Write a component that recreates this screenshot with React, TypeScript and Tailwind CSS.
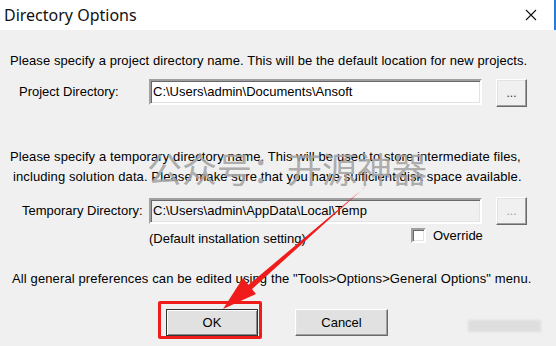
import React from "react";

const sunken =
  "border-2 border-t-[#a0a0a0] border-l-[#a0a0a0] border-b-white border-r-white shadow-[inset_1px_1px_0_#696969,inset_-1px_-1px_0_#e3e3e3]";
const raised =
  "border border-t-white border-l-white border-b-[#696969] border-r-[#696969] shadow-[inset_-1px_-1px_0_#a0a0a0,inset_1px_1px_0_#e3e3e3]";

export default function App() {
  return (
    <div className="w-[556px] h-[346px] overflow-hidden bg-[#f0f0f0] text-black font-['Liberation_Sans',Arial,sans-serif] text-[13px]">
      {/* Title bar */}
      <div className="h-[30px] bg-white flex items-center justify-between border-r-2 border-r-[#2b7ad8]">
        <span className="pl-[4px] text-[16px] font-['Noto_Sans',sans-serif] text-[#111] leading-none">
          Directory Options
        </span>
        <svg width="12" height="12" viewBox="0 0 12 12" className="mr-[17px]">
          <path d="M1 1 L11 11 M11 1 L1 11" stroke="#111" strokeWidth="1.1" />
        </svg>
      </div>

      {/* Body */}
      <div className="relative h-[316px] pt-[23px]">
        <p className="pl-[10px] leading-[16px] tracking-[0.08px]">
          Please specify a project directory name. This will be the default location for new projects.
        </p>

        <div className="mt-[10px] flex items-start">
          <span className="w-[149px] pl-[19px] leading-[26px]">Project Directory:</span>
          <div className={`w-[333px] h-[26px] bg-white ${sunken} pl-[2px] leading-[22px]`}>
            C:\Users\admin\Documents\Ansoft
          </div>
          <button className={`ml-[14px] w-[31px] h-[28px] bg-[#f0f0f0] ${raised} text-[12px] leading-[26px] text-[#333]`}>
            ...
          </button>
        </div>

        <div className="mt-[40px] leading-[20px] tracking-[0.1px]">
          <p className="pl-[10px]">
            Please specify a temporary directory name. This will be used to store intermediate files,
          </p>
          <p className="pl-[13px]">
            including solution data. Please make sure that you have sufficient disk space available.
          </p>
        </div>

        <div className="mt-[11px] flex items-start">
          <span className="w-[149px] pl-[22px] leading-[26px]">Temporary Directory:</span>
          <div className={`w-[333px] h-[26px] bg-[#f0f0f0] ${sunken} pl-[2px] leading-[22px]`}>
            C:\Users\admin\AppData\Local\Temp
          </div>
          <button
            disabled
            className={`ml-[14px] -mt-[1px] w-[31px] h-[28px] bg-[#f0f0f0] ${raised} text-[12px] leading-[26px] text-[#a0a0a0]`}
          >
            ...
          </button>
        </div>

        <div className="flex items-start h-[22px]">
          <span className="w-[411px] pl-[149px] pt-[6px] leading-[16px]">
            (Default installation setting)
          </span>
          <span className={`mt-[3px] w-[15px] h-[15px] bg-white ${sunken}`} />
          <span className="ml-[7px] mt-[3px] leading-[16px]">Override</span>
        </div>

        <p className="mt-[24px] pl-[12px] leading-[16px] tracking-[0.12px]">
          All general preferences can be edited using the "Tools&gt;Options&gt;General Options" menu.
        </p>

        <div className="mt-[22px] flex pl-[166px] gap-[37px]">
          <div className="relative">
            <button className="w-[92px] h-[27px] bg-[#e1e1e1] border border-[#333] shadow-[inset_1px_1px_0_#fff,inset_-1px_-1px_0_#8a8a8a]">
              OK
            </button>
            <div className="absolute -left-[8px] -top-[8px] w-[104px] h-[38px] border-[3px] border-[#f01c1c] rounded-[2px]" />
          </div>
          <button className={`w-[93px] h-[27px] bg-[#e1e1e1] ${raised}`}>Cancel</button>
        </div>

        {/* watermark overlay */}
        <div className="absolute left-[147px] top-[120px] text-[35px] leading-none font-normal text-[#a4a4a4]/90 font-['Noto_Sans_CJK_SC',sans-serif] pointer-events-none">
          公众号：开源神器
        </div>

        {/* red arrow overlay */}
        <svg className="absolute left-0 top-0 pointer-events-none" width="556" height="316" viewBox="0 30 556 316">
          <polygon points="366,186 364,188 247,286 251,290" fill="#f01c1c" />
          <polygon points="223,309 243,278 256,294" fill="#f01c1c" />
        </svg>

        {/* blurred patch */}
        <div className="absolute left-[468px] top-[290px] w-[73px] h-[12px] bg-[#dedede] blur-[1px]" />
      </div>
    </div>
  );
}
